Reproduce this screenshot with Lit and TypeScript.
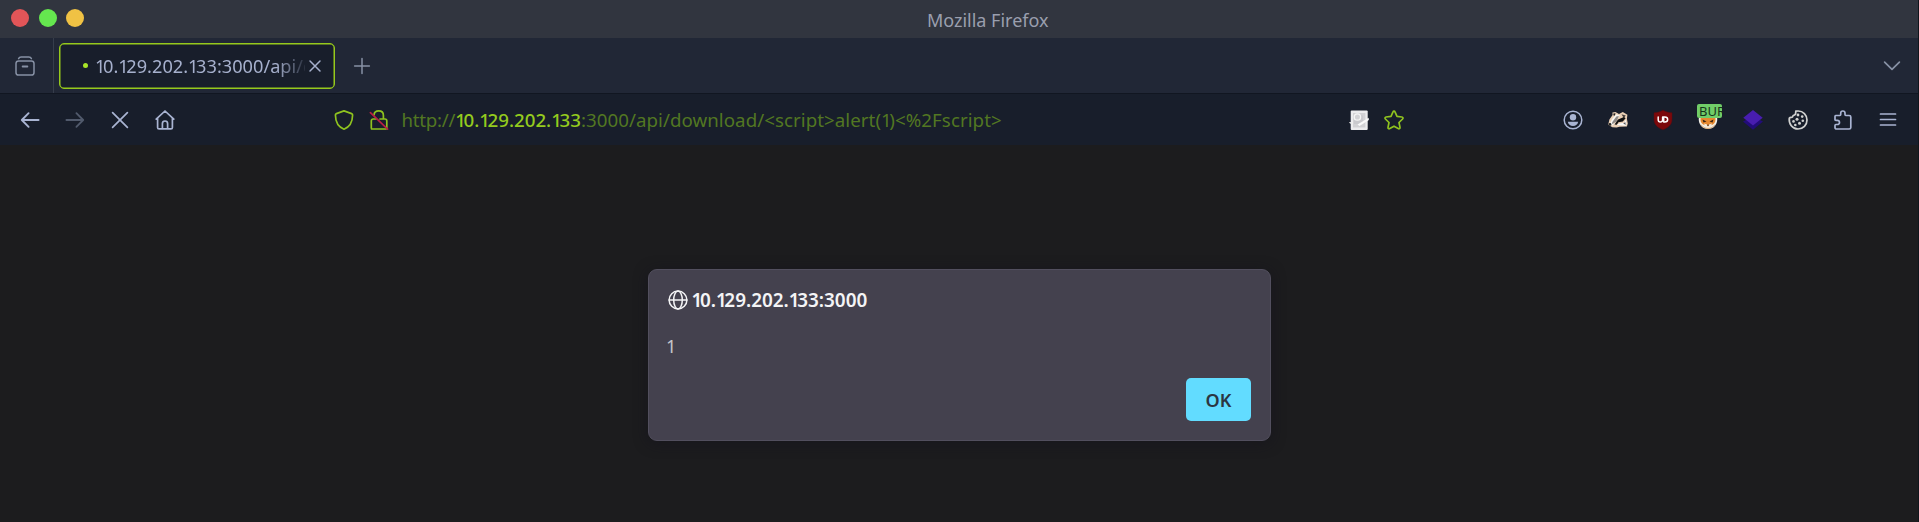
import { LitElement, html, css, svg } from "lit";
import { customElement, property } from "lit/decorators.js";

const glyphs: Record<string, unknown> = {
  archive: svg`<path d="M3.6 2.6C4.2 1.2 5 1 6.2 1h7.6c1.2 0 2 .2 2.6 1.6"/><rect x="1" y="5" width="18" height="14" rx="2.6"/><path d="M7.6 10.5h4.8" stroke-width="1.8"/>`,
  close: svg`<path d="M5 5l10 10M15 5L5 15"/>`,
  plus: svg`<path d="M10 2.6v14.8M2.6 10h14.8"/>`,
  back: svg`<path d="M18.6 10H2M8.6 3.2L1.8 10l6.8 6.8" stroke-width="1.9"/>`,
  forward: svg`<path d="M1.4 10H18M11.4 3.2l6.8 6.8-6.8 6.8" stroke-width="1.8"/>`,
  stop: svg`<path d="M2.6 2.6l14.8 14.8M17.4 2.6L2.6 17.4" stroke-width="1.7"/>`,
  home: svg`<path d="M1.2 9.2L10 1l8.8 8.2M2.6 8.2v9.2c0 .9.5 1.4 1.4 1.4h12c.9 0 1.4-.5 1.4-1.4V8.2M7.4 18.6v-5c0-1.6 1-2.6 2.6-2.6s2.6 1 2.6 2.6v5" stroke-width="1.7"/>`,
  shield: svg`<path d="M10 .9l7.6 2.7c.7.3 1 .8 1 1.5C18.5 11.5 16 17 10 19.2 4 17 1.5 11.5 1.4 5.1c0-.7.3-1.2 1-1.5z" stroke-width="1.7"/>`,
  lock: svg`<path d="M5 4.8C5.3 2.3 7.2.9 9.7.9c2.8 0 4.7 1.9 4.7 4.6V9M2.6 19h14.200c.7 0 1-.4 1-1.100v-7c0-1.200-.7-1.900-1.900-1.900H11M7 9H4.200C3 9 2.300 9.700 2.300 10.900v7c0 .7.3 1.100 1 1.100" stroke-width="1.7"/><path d="M1.4 2.6l17.2 16.6" stroke="#b91f45" stroke-width="1.7"/>`,
  note: svg`<g stroke="none"><rect x="1.7" y=".4" width="17" height="19.6" rx="1" fill="#ececee"/><rect x="4" y="3" width="12.4" height="14.5" fill="#d2d2d5"/><path d="M5 5.500h9v8.500H5z" fill="#c9c9cd"/><circle cx="8.400" cy="7" r="3.200" fill="#d3d3d6" stroke="#f6f6f6" stroke-width="1.300"/><path d="M8.500 14.500L19.600 7.800l.3 2.300-9.400 6z" fill="#fafafa"/><path d="M0 12l4 .3v2L1 13.500z" fill="#eee"/></g>`,
  star: svg`<path d="M10 1.100c.5 0 .8.300 1 .8l2 4.500 4.900.6c1.100.2 1.500 1.200.7 2L15 12.500l1 4.800c.2 1.200-.8 1.900-1.800 1.300L10 16.200l-4.200 2.400c-1 .6-2-.1-1.800-1.300l1-4.800L1.400 9c-.8-.8-.4-1.800.7-2L7 6.400l2-4.500c.2-.5.500-.8 1-.8z" stroke-width="1.700"/>`,
  account: svg`<circle cx="10" cy="10" r="8.8"/><circle cx="10" cy="7.3" r="3.2" fill="currentColor" stroke="none"/><path d="M4.8 11.8h10.4c-.4 2.5-2.4 4.2-5.2 4.2s-4.8-1.7-5.2-4.2z" fill="currentColor" stroke="none"/>`,
  badger: svg`<g stroke="none"><path d="M.2 14.8l1.2-5.200L4.600 5l-.2-2.600 3-.4L11 4l3.800-1.900 4.600 2.700-.5 4 .9 4.600-.9 3.200-7.400.2-2.900.7-4.200-.2z" fill="#ead0b6"/><path d="M1.600 14.400L4 9.300l4.200-5 3.800 1.200-4.300 5-2.800 5z" fill="#f8f7f3"/><path d="M5.300 5.300l.3-2 2 .1-1 2.400z" fill="#222"/><path d="M13.500 4.200l4.300 1.300-2 2.600z" fill="#46403d"/><path d="M4 12.500l4.300-6 2.600-.6-2.300 5.300-4.200 3z" fill="#8e8986"/><path d="M6.600 14.400l3.400-5L16 7l1.600 1.200-2.800 3.300-4.400.7-1.500 2.600z" fill="#111"/><path d="M8.600 15l2.700-1.600 4.900-.7 1.400-3.200.9 4.200-.7 2z" fill="#fafafa"/><path d="M15.200 13.200l2.200-.9.300 2.600z" fill="#555"/><circle cx="2" cy="14.400" r="1.400" fill="#222"/></g>`,
  ublock: svg`<path d="M10 .3c2.9 1.7 5.9 2.4 9 2.5v6.7c0 5.2-3.6 8-9 10.3C4.6 17.5 1 14.7 1 9.5V2.8C4.1 2.7 7.1 2 10 .3z" fill="#7b080b" stroke="#550c12" stroke-width=".5"/><path d="M5.2 7v2.8c0 3 4.4 3 4.4 0V7M10.2 7h1.6c3.800 0 3.800 5 0 5h-1.100V7" stroke="#fff" stroke-width="1.500"/>`,
  fox: svg`<g stroke="none"><path d="M.7 8.700c0 6.400 4 10.300 9.300 10.300s9.300-3.900 9.300-10.300L16 2H4z" fill="#f2f0e8"/><path d="M2.700 7C4.800 4 15 4 17.300 7c.7 4-.3 6-2.300 7.500l-2 .8-1.500 1.700h-3L7 15.300l-2-.8C3 13 2 11 2.700 7z" fill="#e8892f"/><path d="M4.500 9.500l4 2-3 1zM15.500 9.500l-4 2 3 1z" fill="#3a2516"/><path d="M6 13.500l3 1 1 2 1-2 3-1-1.500 3.700-2.500 1.300-2.500-1.300z" fill="#f6ead8"/><path d="M3 14.800c3.500 5 10.500 5 14 0" fill="none" stroke="#d79a5f" stroke-width=".8"/><path d="M9 14.800h2l-1 1.500z" fill="#211"/></g>`,
  layers: svg`<g stroke="none"><path d="M0 11.5l10-5 10 5-10 8.200z" fill="#220c78"/><path d="M.3 7.800L10 .1l9.700 7.700L10 15.500z" fill="#481db0"/></g>`,
  cookie: svg`<path d="M7.8 1.2c-.2 2.5.2 3.7-1.6 4-1 .2-1.5 1-1.7 1.8-1.200.5-2.300.4-3.200 1.100C.5 13.800 4.500 19 10 19c5.200 0 9-4 9-9S15 1 10.200 1c-.8 0-1.500 0-2.400.2z" stroke="#d0d1d0" stroke-width="1.700"/><g fill="#d0d1d0" stroke="none"><circle cx="10" cy="5" r="1.400"/><circle cx="14.200" cy="6.600" r="1.300"/><circle cx="9" cy="9.300" r="1.500"/><circle cx="14.800" cy="10.700" r="1.300"/><circle cx="5.500" cy="11.400" r="1.300"/><circle cx="11.500" cy="13.300" r="1.500"/><circle cx="7.300" cy="15" r="1.300"/></g>`,
  puzzle: svg`<path d="M2.6 5.500h4.300c.5 0 .8-.3.800-.9V3.300C7.700 1.800 8.500 1 9.800 1s2.200.8 2.200 2.300v1.300c0 .6.3.9.800.9h3.400c1 0 1.600.6 1.600 1.600v10.300c0 1-.6 1.600-1.600 1.600H3.600c-1 0-1.600-.6-1.600-1.600v-2c0-.6.3-.9.900-.9h1.300c1.500 0 2.300-.9 2.300-2.100s-.8-2.100-2.300-2.100H2.900c-.6 0-.9-.3-.9-.9V6.500c0-.6.200-1 .6-1z" stroke-width="1.700"/>`,
  menu: svg`<path d="M2.5 4h15M2.5 9.5h15M2.5 15h15" stroke-width="1.7"/>`,
  chevron: svg`<path d="M2.6 6.2L10 13.4l7.4-7.2" stroke-width="1.7"/>`,
  globe: svg`<circle cx="10" cy="10" r="8.9"/><ellipse cx="10" cy="10" rx="4.3" ry="8.9"/><path d="M1.1 10h17.8"/>`,
};

@customElement("ui-icon")
export class UiIcon extends LitElement {
  static styles = css`
    :host { display: block; width: 20px; height: 20px; flex: none; }
    .glyph { display: block; overflow: visible; fill: none; stroke: currentColor; stroke-width: 1.5; stroke-linecap: round; stroke-linejoin: round; }
  `;
  @property() name = "";
  render() {
    return html`<svg class="glyph" width="20" height="20" viewBox="0 0 20 20">${glyphs[this.name]}</svg>`;
  }
}

// Tightens the space after each digit 1, so that figures are proportional.
const figures = (text: string) =>
  text.split(/(1)/).map((part) => (part === "1" ? html`<span class="one">1</span>` : part));

@customElement("app-root")
export class AppRoot extends LitElement {
  static styles = css`
    :host { display: flex; flex-direction: column; height: 522px; overflow: hidden; box-sizing: border-box; border-right: 1px solid #10151c; background: #1c1c1e; font-family: "Noto Sans", sans-serif; font-size: 18px; }
    .one { letter-spacing: -2.4px; }
    .titlebar { display: grid; grid-template-columns: 1fr auto 1fr; align-items: center; height: 38px; flex: none; background: #31353f; color: #9a9fae; font-size: 18px; }
    .lights { display: flex; gap: 9.5px; padding-left: 11px; margin-top: -2px; }
    .light { width: 18px; height: 18px; border-radius: 50%; }
    .red { background: #e25558; }
    .green { background: #65e74f; }
    .yellow { background: #f0c244; }
    .window-name { padding: 1px 0 0 57.5px; }
    .tabs { display: flex; align-items: center; height: 56px; flex: none; box-sizing: border-box; background: #212736; border-bottom: 1px solid #111621; color: #8791a5; }
    .recent { width: 54px; height: 55px; display: flex; align-items: center; padding-left: 15px; box-sizing: border-box; border-right: 1px solid #363d4b; }
    .tab { display: flex; align-items: center; width: 276px; height: 46px; margin: 0 17px 0 5px; box-sizing: border-box; border: 1px solid #96c91c; box-shadow: inset 0 0 0 .5px #96c91c; border-radius: 5px; background: #181e2b; padding: 0 9px 0 23px; color: #a6b0cd; }
    .dot { width: 5px; height: 5px; border-radius: 50%; background: #a8e528; margin-right: 7px; flex: none; }
    .tab-name { flex: 1; overflow: hidden; white-space: nowrap; font-size: 18.2px; -webkit-mask-image: linear-gradient(90deg, #000 86%, transparent 102%); mask-image: linear-gradient(90deg, #000 86%, transparent 102%); }
    .spacer { flex: 1; }
    .all-tabs { margin-right: 16px; }
    .toolbar { display: flex; align-items: center; height: 51px; flex: none; background: #181e2b; color: #a9b4d2; }
    .buttons { display: flex; padding-left: 7.5px; }
    .cell { width: 45px; display: flex; justify-content: center; }
    .dim { color: #515a6c; }
    .address { display: flex; align-items: center; width: 1070px; margin-left: 146px; color: #8fc31f; }
    .lock { margin: 0 13px 0 15px; }
    .url { flex: 1; white-space: pre; font-size: 18.7px; color: #527722; }
    .scheme { letter-spacing: -.25px; }
    .host { color: #94cb1e; font-weight: 500; }
    .path { letter-spacing: .06px; }
    .page-actions { display: flex; gap: 15px; }
    .extensions { display: flex; margin-left: auto; padding-right: 8px; }
    .badged { position: relative; }
    .badge { position: absolute; left: 12px; top: -6px; width: 25px; height: 14px; overflow: hidden; border-radius: 2px; background: #71cd68; color: #17351b; font: 13px/14px "Noto Sans", sans-serif; text-indent: 2px; }
    .page { display: flex; justify-content: center; align-items: flex-start; flex: 1; padding: 124px 0 0 1px; }
    .dialog { width: 623px; height: 172px; box-sizing: border-box; border: 1px solid #524f5e; border-radius: 9px; background: #44414e; box-shadow: 0 2px 14px rgba(20,19,28,.6); padding: 17px 19px; display: flex; flex-direction: column; color: #f4f4f6; }
    .origin { display: flex; align-items: center; gap: 3.5px; height: 26px; font-weight: 600; font-size: 18.9px; }
    .message { margin: 20px 0 0 -2px; line-height: 26px; color: #c5c4ca; }
    .ok { margin: auto 0 2px auto; width: 65px; height: 43px; border: 0; border-radius: 5px; background: #62dcff; color: #2b3642; font: 600 18px "Noto Sans", sans-serif; padding: 0; }
  `;

  private cell(name: string, extra = "") {
    return html`<div class="cell ${extra}"><ui-icon name=${name}></ui-icon></div>`;
  }

  render() {
    return html`
      <header class="titlebar">
        <div class="lights"><span class="light red"></span><span class="light green"></span><span class="light yellow"></span></div>
        <div class="window-name">Mozilla Firefox</div>
      </header>
      <div class="tabs">
        <div class="recent"><ui-icon name="archive"></ui-icon></div>
        <div class="tab"><span class="dot"></span><span class="tab-name">${figures("10.129.202.133:3000/api/download")}</span><ui-icon name="close"></ui-icon></div>
        <ui-icon name="plus"></ui-icon>
        <div class="spacer"></div>
        <ui-icon class="all-tabs" name="chevron"></ui-icon>
      </div>
      <nav class="toolbar">
        <div class="buttons">${this.cell("back")}${this.cell("forward", "dim")}${this.cell("stop")}${this.cell("home")}</div>
        <div class="address">
          <ui-icon name="shield"></ui-icon><ui-icon class="lock" name="lock"></ui-icon>
          <span class="url"><span class="scheme">http://</span><span class="host">${figures("10.129.202.133")}</span><span class="path">${figures(":3000/api/download/<script>alert(1)<%2Fscript>")}</span></span>
          <div class="page-actions"><ui-icon name="note"></ui-icon><ui-icon name="star"></ui-icon></div>
        </div>
        <div class="extensions">
          ${this.cell("account")}${this.cell("badger")}${this.cell("ublock")}
          <div class="cell badged"><ui-icon name="fox"></ui-icon><span class="badge">BUR</span></div>
          ${this.cell("layers")}${this.cell("cookie")}${this.cell("puzzle")}${this.cell("menu")}
        </div>
      </nav>
      <main class="page">
        <section class="dialog">
          <div class="origin"><ui-icon name="globe"></ui-icon><span>${figures("10.129.202.133:3000")}</span></div>
          <p class="message">1</p>
          <button class="ok">OK</button>
        </section>
      </main>`;
  }
}
